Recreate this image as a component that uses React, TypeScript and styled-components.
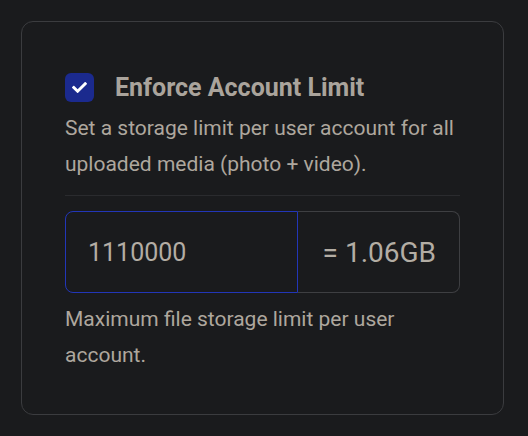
import React from "react";
import styled, { createGlobalStyle } from "styled-components";
import { FaCheck } from "react-icons/fa";

const Global = createGlobalStyle`
  html, body {
    margin: 0;
    padding: 0;
    background: #1a1b1d;
  }
  body {
    font-family: Roboto, "Noto Sans", sans-serif;
    color: #aea79e;
  }
  * { box-sizing: border-box; }
`;

const Page = styled.div`
  padding: 21px 0 0 21px;
`;

const Card = styled.section`
  width: 483px;
  height: 394px;
  border: 1px solid #3b3c3f;
  border-radius: 12px;
  padding: 51px 43px 0 43px;
`;

const Header = styled.label`
  display: flex;
  align-items: center;
  gap: 21px;
`;

const Check = styled.span`
  width: 29px;
  height: 29px;
  border-radius: 6px;
  background: #1b2a8e;
  display: flex;
  align-items: center;
  justify-content: center;
  color: #ffffff;
  font-size: 15px;
`;

const Title = styled.h2`
  margin: 0;
  font-size: 25px;
  font-weight: 700;
  color: #aaa49c;
  line-height: 29px;
`;

const Text = styled.p<{ $mt?: number }>`
  margin: ${(p) => p.$mt ?? 0}px 0 0 0;
  font-size: 21px;
  line-height: 36px;
  color: #aea79e;
`;

const Divider = styled.hr`
  margin: 13px 0 0 0;
  border: 0;
  height: 1px;
  background: #2a2b2e;
`;

const Group = styled.div`
  margin-top: 15px;
  display: flex;
  height: 82px;
`;

const Input = styled.div`
  width: 233px;
  border: 1px solid #2236b8;
  border-radius: 8px 0 0 8px;
  display: flex;
  align-items: center;
  padding-left: 22px;
  font-size: 25px;
  color: #b3ada4;
`;

const Addon = styled.div`
  flex: 1;
  border: 1px solid #3e3f42;
  border-left: 0;
  border-radius: 0 8px 8px 0;
  display: flex;
  align-items: center;
  justify-content: flex-end;
  padding-right: 23px;
  font-size: 28px;
  color: #b3ada4;
`;

export default function App() {
  return (
    <>
      <Global />
      <Page>
        <Card>
          <Header>
            <Check>
              <FaCheck />
            </Check>
            <Title>Enforce Account Limit</Title>
          </Header>
          <Text $mt={8}>
            Set a storage limit per user account for all uploaded media (photo + video).
          </Text>
          <Divider />
          <Group>
            <Input>1110000</Input>
            <Addon>= 1.06GB</Addon>
          </Group>
          <Text $mt={8}>Maximum file storage limit per user account.</Text>
        </Card>
      </Page>
    </>
  );
}
